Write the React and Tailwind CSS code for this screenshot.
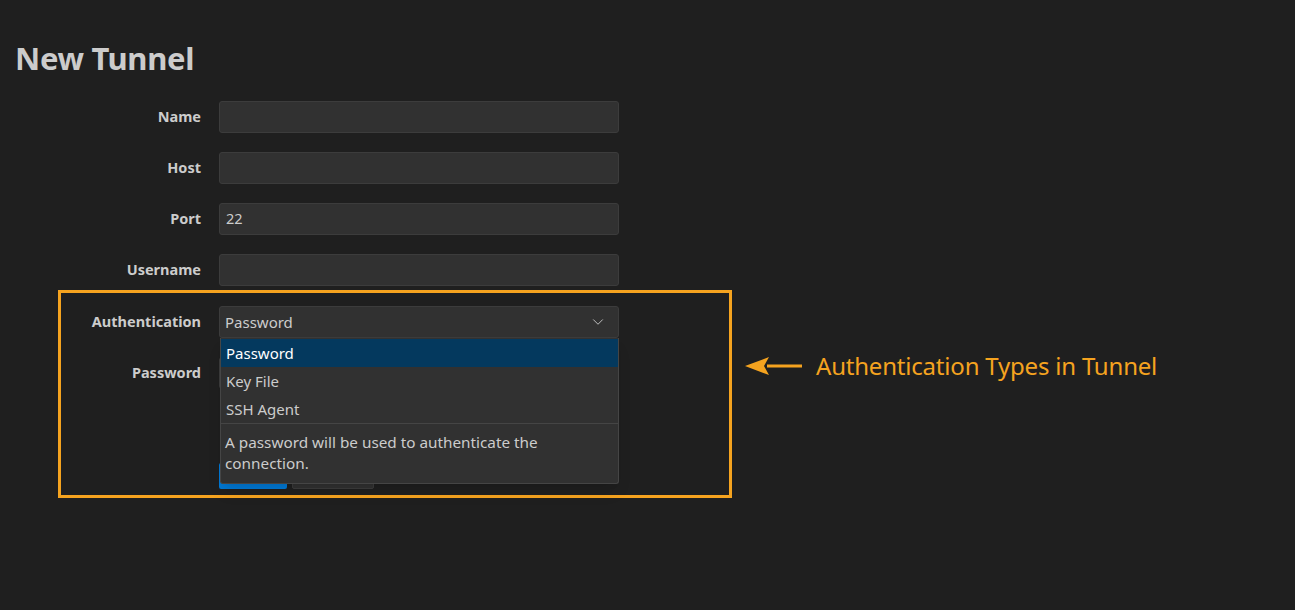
import React from "react";
import { ChevronDown } from "lucide-react";

const fields = [
  { label: "Name", value: "" },
  { label: "Host", value: "" },
  { label: "Port", value: "22" },
  { label: "Username", value: "" },
];

const options = ["Password", "Key File", "SSH Agent"];

const Row = ({ label, children, className = "" }) => (
  <div className={`flex items-center gap-[18px] h-8 ${className}`}>
    <label className="w-[186px] text-right text-[14.5px] font-bold text-[#cccccc]">{label}</label>
    <div className="w-[400px] h-8 relative">{children}</div>
  </div>
);

const Input = ({ value }) => (
  <div className="h-8 w-full rounded-[3px] border border-[#3c3c3c] bg-[#313131] px-[6px] flex items-center text-[14.5px] text-[#cccccc]">
    {value}
  </div>
);

const App = () => {
  return (
    <div
      className="min-h-[610px] w-full bg-[#1f1f1f] relative overflow-hidden"
      style={{ fontFamily: '"Noto Sans", "Open Sans", sans-serif' }}
    >
      <div className="px-[15px] pt-[36px]">
        <h1 className="text-[31px] leading-[44px] font-bold text-[#cccccc] tracking-[-0.3px]">New Tunnel</h1>

        <div className="mt-[21px] flex flex-col gap-[19px]">
          {fields.map((f) => (
            <Row key={f.label} label={f.label}>
              <Input value={f.value} />
            </Row>
          ))}

          <Row label="Authentication" className="mt-[1px]">
            <div className="h-8 w-full rounded-[3px] border border-[#3c3c3c] bg-[#313131] pl-[5px] pr-[11px] flex items-center justify-between text-[15px] text-[#cccccc]">
              <span>Password</span>
              <ChevronDown className="w-[18px] h-[18px] text-[#cccccc]" strokeWidth={1.2} />
            </div>
            <div className="absolute z-10 left-[1px] right-0 top-8 rounded-b-[3px] border border-t-0 border-[#454545] bg-[#313131] text-[15px] text-[#cccccc] shadow-lg">
              <div className="pt-[1px]">
                {options.map((o, i) => (
                  <div
                    key={o}
                    className={`h-[28px] px-[5px] flex items-center ${
                      i === 0 ? "bg-[#04395e] text-white" : ""
                    }`}
                  >
                    {o}
                  </div>
                ))}
              </div>
              <div className="border-t border-[#454545] px-[4px] pt-[8px] pb-[9px] leading-[21px] text-[15.3px]">
                A password will be used to authenticate the
                <br />
                connection.
              </div>
            </div>
          </Row>

          <Row label="Password">
            <Input value="" />
          </Row>
        </div>

        {/* save / cancel buttons, mostly covered by the open dropdown */}
        <div className="ml-[204px] mt-[74px] flex gap-[5px]">
          <button aria-label="Save" className="h-[26px] w-[68px] rounded-[2px] bg-[#0078d4]" />
          <button aria-label="Cancel" className="h-[26px] w-[82px] rounded-[2px] border border-[#3c3c3c] bg-[#313131]" />
        </div>
      </div>

      {/* annotation */}
      <div className="absolute left-[58px] top-[290px] w-[674px] h-[208px] border-[3px] border-[#f5a31f] pointer-events-none" />
      <div className="absolute left-[745px] top-[350px] flex items-center gap-[13px]">
        <svg width="58" height="32" viewBox="0 0 58 32">
          <line x1="22" y1="16" x2="57" y2="16" stroke="#f5a31f" strokeWidth="3" />
          <polygon points="0,16 24,7 19,16 24,25" fill="#f5a31f" />
        </svg>
        <span className="text-[24px] text-[#f5a31f] leading-8 tracking-[-0.2px]">Authentication Types in Tunnel</span>
      </div>
    </div>
  );
};

export default App;
